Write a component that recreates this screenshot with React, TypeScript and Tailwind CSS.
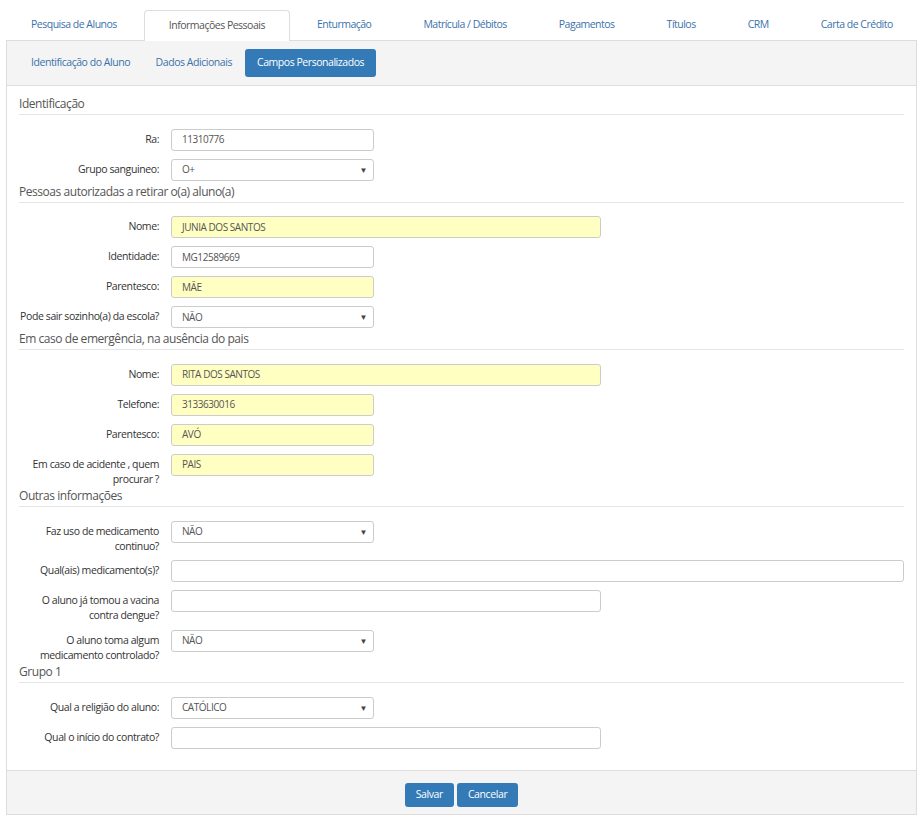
import React from 'react';

const tabs = [
  'Pesquisa de Alunos',
  'Informações Pessoais',
  'Enturmação',
  'Matrícula / Débitos',
  'Pagamentos',
  'Títulos',
  'CRM',
  'Carta de Crédito',
];

type Field = {
  label: string;
  value?: string;
  kind?: 'input' | 'select';
  size?: 'sm' | 'md' | 'lg';
  yellow?: boolean;
};

type Section = { title: string; fields: Field[] };

const sections: Section[] = [
  {
    title: 'Identificação',
    fields: [
      { label: 'Ra:', value: '11310776' },
      { label: 'Grupo sanguineo:', value: 'O+', kind: 'select' },
    ],
  },
  {
    title: 'Pessoas autorizadas a retirar o(a) aluno(a)',
    fields: [
      { label: 'Nome:', value: 'JUNIA DOS SANTOS', size: 'md', yellow: true },
      { label: 'Identidade:', value: 'MG12589669' },
      { label: 'Parentesco:', value: 'MÃE', yellow: true },
      { label: 'Pode sair sozinho(a) da escola?', value: 'NÃO', kind: 'select' },
    ],
  },
  {
    title: 'Em caso de emergência, na ausência do pais',
    fields: [
      { label: 'Nome:', value: 'RITA DOS SANTOS', size: 'md', yellow: true },
      { label: 'Telefone:', value: '3133630016', yellow: true },
      { label: 'Parentesco:', value: 'AVÓ', yellow: true },
      { label: 'Em caso de acidente , quem procurar ?', value: 'PAIS', yellow: true },
    ],
  },
  {
    title: 'Outras informações',
    fields: [
      { label: 'Faz uso de medicamento continuo?', value: 'NÃO', kind: 'select' },
      { label: 'Qual(ais) medicamento(s)?', size: 'lg' },
      { label: 'O aluno já tomou a vacina contra dengue?', size: 'md' },
      { label: 'O aluno toma algum medicamento controlado?', value: 'NÃO', kind: 'select' },
    ],
  },
  {
    title: 'Grupo 1',
    fields: [
      { label: 'Qual a religião do aluno:', value: 'CATÓLICO', kind: 'select' },
      { label: 'Qual o início do contrato?', size: 'md' },
    ],
  },
];

function FormRow({ field }: { field: Field }) {
  const width =
    field.size === 'lg' ? 'flex-1' : field.size === 'md' ? 'w-[430px]' : 'w-[203px]';
  const bg = field.yellow ? 'bg-[#ffffc2]' : 'bg-white';
  return (
    <div className="flex items-start">
      <label className="w-[140px] shrink-0 pt-[3px] -mb-[1.5px] text-right text-[10.5px] leading-[15px] tracking-[-0.4px] text-[#333]">
        {field.label}
      </label>
      <div
        className={`ml-[12px] flex h-[22px] items-center justify-between rounded-[3px] border border-[#cccccc] pl-[10px] pr-[6px] text-[10px] tracking-[-0.45px] text-[#555] ${width} ${bg}`}
      >
        <span>{field.value ?? ''}</span>
        {field.kind === 'select' && <span className="text-[8px] text-[#444]">▼</span>}
      </div>
    </div>
  );
}

export default function App() {
  return (
    <div
      className="min-h-[822px] bg-white pl-[6px] pr-[7px] pt-[10px]"
      style={{ fontFamily: '"Open Sans", "Liberation Sans", sans-serif' }}
    >
      <div className="flex gap-[2px]">
        {tabs.map((t, i) =>
          i === 1 ? (
            <div
              key={t}
              className="relative -mb-[1px] flex h-[31px] items-center whitespace-nowrap rounded-t-[4px] border border-b-0 border-[#dddddd] bg-white px-[24px] text-[10.5px] tracking-[-0.5px] text-[#555]"
            >
              {t}
            </div>
          ) : (
            <div
              key={t}
              className="flex h-[30px] items-center whitespace-nowrap px-[25px] text-[10.5px] tracking-[-0.5px] text-[#3a72ab]"
            >
              {t}
            </div>
          ),
        )}
      </div>

      <div className="border border-[#dddddd]">
        <div className="flex gap-[2px] border-b border-[#dddddd] bg-[#f4f4f4] px-[12px] py-[8px] text-[10.5px] tracking-[-0.45px]">
          <div className="flex h-[28px] items-center px-[12px] text-[#3a72ab]">Identificação do Aluno</div>
          <div className="flex h-[28px] items-center px-[11.5px] text-[#3a72ab]">Dados Adicionais</div>
          <div className="flex h-[28px] items-center rounded-[3px] bg-[#337ab7] px-[11.5px] text-white">
            Campos Personalizados
          </div>
        </div>

        <div className="flex flex-col gap-[2px] bg-white px-[12px] pb-[21px] pt-[9px]">
          {sections.map((s) => (
            <div key={s.title}>
              <div className="mb-[13.5px] h-[20px] border-b border-[#e5e5e5] text-[12px] leading-[18px] tracking-[-0.45px] text-[#555]">
                {s.title}
              </div>
              <div className="flex flex-col gap-[8px]">
                {s.fields.map((f, i) => (
                  <FormRow key={i} field={f} />
                ))}
              </div>
            </div>
          ))}
        </div>

        <div className="flex justify-center gap-[3px] border-t border-[#dddddd] bg-[#f4f4f4] pb-[7px] pt-[12px]">
          <button className="h-[24px] rounded-[3px] bg-[#337ab7] px-[11px] text-[10.5px] tracking-[-0.4px] text-white">
            Salvar
          </button>
          <button className="h-[24px] rounded-[3px] bg-[#337ab7] px-[11px] text-[10.5px] tracking-[-0.4px] text-white">
            Cancelar
          </button>
        </div>
      </div>
    </div>
  );
}
